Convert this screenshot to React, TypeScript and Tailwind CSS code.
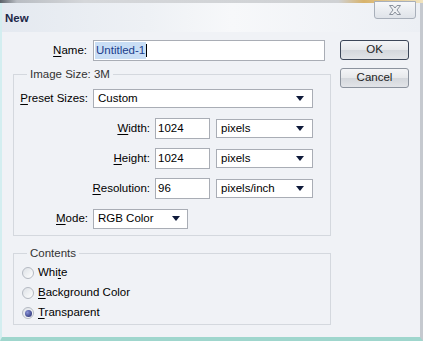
import React from "react";

const font = { fontFamily: '"Liberation Sans", Arial, sans-serif' };

function Arrow() {
  return (
    <svg width="8" height="5" viewBox="0 0 8 5" className="shrink-0">
      <path d="M0 0 H8 L4 5 Z" fill="#0f1a3a" />
    </svg>
  );
}

function Select({ label, w }: { label: string; w: string }) {
  return (
    <div
      className={`${w} h-[19px] flex items-center justify-between pl-[4px] pr-[8px] border border-[#a9adb5] bg-white text-[11.5px] text-black`}
    >
      <span>{label}</span>
      <Arrow />
    </div>
  );
}

function Input({ value, w }: { value: string; w: string }) {
  return (
    <div className={`${w} h-[21px] flex items-center pl-[2px] border border-[#a9adb5] bg-white text-[11.5px] text-black`}>
      {value}
    </div>
  );
}

function U({ c }: { c: string }) {
  return <span className="underline underline-offset-[2px]">{c}</span>;
}

function Radio({ checked }: { checked?: boolean }) {
  return (
    <span className="w-[12px] h-[12px] rounded-full border border-[#b4b9c2] bg-gradient-to-br from-[#dde1e6] to-white flex items-center justify-center shrink-0">
      {checked && <span className="w-[7px] h-[7px] rounded-full bg-[radial-gradient(circle_at_35%_35%,#8a93d8,#1b2366)]" />}
    </span>
  );
}

export default function App() {
  return (
    <div className="w-[423px] h-[341px] overflow-hidden bg-[#f0f2f6] flex flex-col text-black" style={font}>
      {/* desktop strip */}
      <div className="h-[3px] shrink-0 bg-[linear-gradient(90deg,#5c626a_0%,#b9bdc3_4%,#d5d7da_20%,#cfd1d4_80%,#d8b36c_86%,#f1e4bf_100%)]" />
      <div className="flex-1 flex flex-col border-l-[2px] border-l-[#d3eef0] border-r-[3px] border-r-[#c5c9cf] border-b-[4px] border-b-[#9fd6cd]">
        {/* title bar */}
        <div className="h-[29px] shrink-0 flex items-start justify-between bg-[linear-gradient(90deg,#e4e9f0_0%,#eef1f5_35%,#f7f8fa_55%,#eceff4_100%)]">
          <div className="pl-[3px] pt-[7px] text-[11.5px] font-bold text-[#1d2848]">New</div>
          <div className="mr-[4px] -mt-[2px] w-[42px] h-[18px] rounded-b-[3px] border border-[#a8afba] bg-[linear-gradient(180deg,#f6f7f9,#dfe3e9)] flex items-center justify-center">
            <svg width="14" height="10" viewBox="0 0 14 10">
              <path d="M1.5 0.5 L5 0.5 L7 3 L9 0.5 L12.5 0.5 L9 5 L12.5 9.5 L9 9.5 L7 7 L5 9.5 L1.5 9.5 L5 5 Z" fill="#eef0f3" stroke="#8a919c" strokeWidth="1" />
            </svg>
          </div>
        </div>
        {/* body */}
        <div className="flex pl-[11px] pt-[8px] gap-[9px]">
          <div className="w-[318px] flex flex-col text-[11.5px]">
            <div className="flex items-center h-[21px]">
              <div className="w-[74px] text-right"><U c="N" />ame:</div>
              <div className="ml-[6px] w-[232px] h-[21px] flex items-center pl-[1px] border border-[#a9adb5] bg-white">
                <span className="bg-[#c9def5] text-[#1b3d8c] px-[1px]">Untitled-1</span>
                <span className="w-[1px] h-[13px] bg-black" />
              </div>
            </div>
            <fieldset className="mt-[6px] border border-[#d4d8de] px-0 pb-[6px] pt-0">
              <legend className="ml-[13px] px-[3px] h-[14px] leading-[14px] text-[#333]">Image Size: 3M</legend>
              <div className="pt-[7px] flex flex-col gap-[9px] pl-[0px]">
                <div className="flex items-center h-[21px]">
                  <div className="w-[74px] text-right"><U c="P" />reset Sizes:</div>
                  <div className="ml-[5px]"><Select label="Custom" w="w-[220px]" /></div>
                </div>
                <div className="flex items-center h-[21px]">
                  <div className="w-[136px] text-right"><U c="W" />idth:</div>
                  <div className="ml-[5px]"><Input value="1024" w="w-[55px]" /></div>
                  <div className="ml-[6px]"><Select label="pixels" w="w-[97px]" /></div>
                </div>
                <div className="flex items-center h-[21px]">
                  <div className="w-[136px] text-right"><U c="H" />eight:</div>
                  <div className="ml-[5px]"><Input value="1024" w="w-[55px]" /></div>
                  <div className="ml-[6px]"><Select label="pixels" w="w-[97px]" /></div>
                </div>
                <div className="flex items-center h-[21px]">
                  <div className="w-[136px] text-right"><U c="R" />esolution:</div>
                  <div className="ml-[5px]"><Input value="96" w="w-[55px]" /></div>
                  <div className="ml-[6px]"><Select label="pixels/inch" w="w-[97px]" /></div>
                </div>
                <div className="flex items-center h-[21px]">
                  <div className="w-[74px] text-right"><U c="M" />ode:</div>
                  <div className="ml-[5px]">
                    <div className="w-[95px] h-[20px] flex items-center justify-between pl-[4px] pr-[7px] border border-[#a9adb5] bg-white">
                      <span>RGB Color</span>
                      <Arrow />
                    </div>
                  </div>
                </div>
              </div>
            </fieldset>
            <fieldset className="mt-[10px] border border-[#d4d8de] px-0 pb-[1px] pt-0">
              <legend className="ml-[13px] px-[3px] h-[14px] leading-[14px] text-[#333]">Contents</legend>
              <div className="pt-[3px] flex flex-col pl-[8px]">
                <div className="flex items-center h-[20px] gap-[4px]"><Radio /><span>Whi<U c="t" />e</span></div>
                <div className="flex items-center h-[20px] gap-[4px]"><Radio /><span><U c="B" />ackground Color</span></div>
                <div className="flex items-center h-[20px] gap-[4px]"><Radio checked /><span><U c="T" />ransparent</span></div>
              </div>
            </fieldset>
          </div>
          <div className="flex flex-col gap-[8px] text-[11.5px]">
            <button className="w-[69px] h-[20px] rounded-[3px] border border-[#3c4658] bg-[linear-gradient(180deg,#f4f5f7_0%,#e6e8eb_50%,#d4d7dc_51%,#e2e4e8_100%)] text-[#222]">OK</button>
            <button className="w-[69px] h-[20px] rounded-[3px] border border-[#8c939e] bg-[linear-gradient(180deg,#f4f5f7_0%,#e6e8eb_50%,#d4d7dc_51%,#e2e4e8_100%)] text-[#222]">Cancel</button>
          </div>
        </div>
      </div>
    </div>
  );
}
